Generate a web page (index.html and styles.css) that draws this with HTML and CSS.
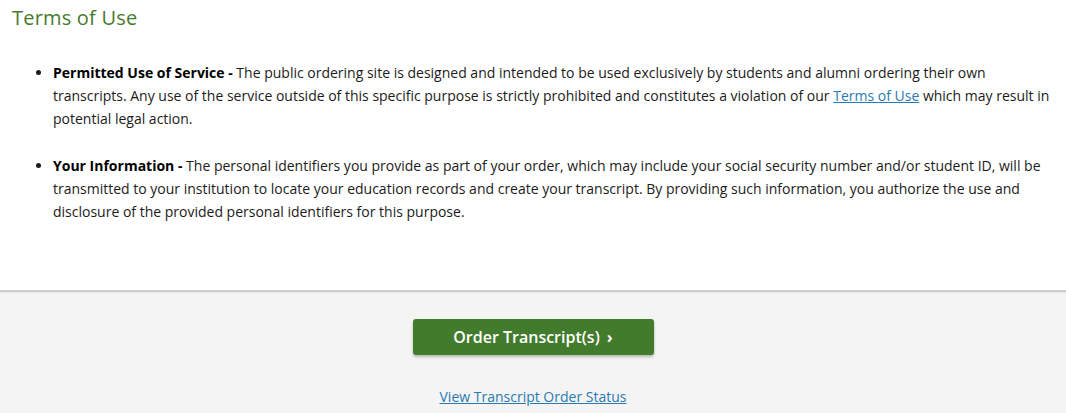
FILE: index.html
```html
<!DOCTYPE html>
<html lang="en">
<head>
<meta charset="utf-8">
<title>Terms of Use</title>
<link rel="stylesheet" href="styles.css">
</head>
<body>
<main class="page">
  <section class="terms">
    <h1 class="terms-title">Terms of Use</h1>
    <ul class="terms-list">
      <li class="terms-item"><strong>Permitted Use of Service -</strong> The public ordering site is designed and intended to be used exclusively by students and alumni ordering their own transcripts. Any use of the service outside of this specific purpose is strictly prohibited and constitutes a violation of our <a class="link" href="#">Terms of Use</a> which may result in potential legal action.</li>
      <li class="terms-item"><strong>Your Information -</strong> The personal identifiers you provide as part of your order, which may include your social security number and/or student ID, will be transmitted to your institution to locate your education records and create your transcript. By providing such information, you authorize the use and disclosure of the provided personal identifiers for this purpose.</li>
    </ul>
  </section>
  <section class="actions">
    <button class="order-btn" type="button">Order Transcript(s) <span class="chev">&#8250;</span></button>
    <a class="link status-link" href="#">View Transcript Order Status</a>
  </section>
</main>
</body>
</html>
```
FILE: styles.css
```css
html, body {
  margin: 0;
  padding: 0;
  background: #fff;
}
body {
  font-family: "Open Sans", "Liberation Sans", sans-serif;
  color: #1b1b1b;
  font-size: 14px;
}
.page {
  display: flex;
  flex-direction: column;
  min-height: 413px;
}
.terms {
  padding: 4px 12px 0 12px;
  height: 290px;
  box-sizing: border-box;
}
.terms-title {
  margin: 0;
  font-family: "Open Sans", sans-serif;
  font-weight: 400;
  font-size: 20px;
  line-height: 28px;
  color: #467b2c;
  letter-spacing: 0.2px;
}
.terms-list {
  margin: 29px 0 0 0;
  padding: 0 0 0 41px;
}
.terms-item {
  line-height: 23px;
  margin-bottom: 24px;
}
.terms-item strong {
  font-weight: 700;
  color: #000;
}
.link {
  color: #2a7aaf;
  text-decoration: underline;
}
.actions {
  flex: 1;
  background: #f4f4f4;
  border-top: 2px solid #cdcdcd;
  box-shadow: inset 0 1px 1px rgba(0,0,0,0.06);
  display: flex;
  flex-direction: column;
  align-items: center;
  padding-top: 27px;
}
.order-btn {
  width: 241px;
  height: 36px;
  background: #437b2c;
  color: #fff;
  border: none;
  border-radius: 3px;
  font-family: "Open Sans", sans-serif;
  font-weight: 600;
  font-size: 16px;
  box-shadow: 0 2px 3px rgba(0,0,0,0.25);
  cursor: pointer;
}
.chev {
  font-weight: 700;
  margin-left: 3px;
}
.status-link {
  margin-top: 32px;
  font-size: 14px;
}
```
